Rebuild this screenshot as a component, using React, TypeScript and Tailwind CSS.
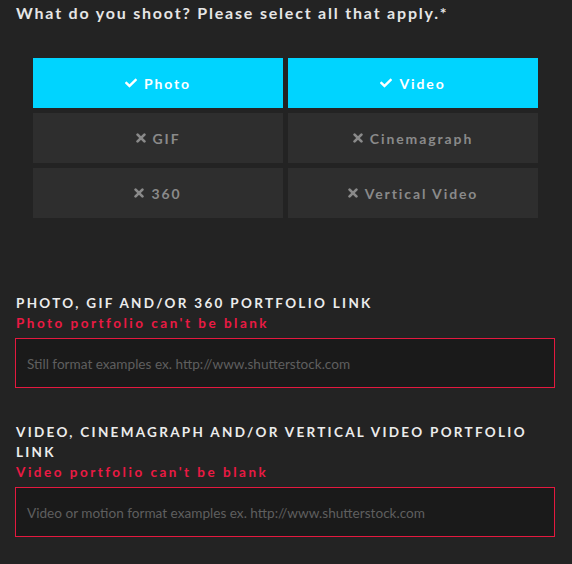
import React from "react";
import { FaCheck } from "react-icons/fa";

const opts = [
  { label: "Photo", on: true },
  { label: "Video", on: true },
  { label: "GIF", on: false },
  { label: "Cinemagraph", on: false },
  { label: "360", on: false },
  { label: "Vertical Video", on: false },
];

function XIcon() {
  return (
    <svg width="10" height="10" viewBox="0 0 10 10" className="shrink-0">
      <path d="M1.6 1.6 L8.4 8.4 M8.4 1.6 L1.6 8.4" stroke="currentColor" strokeWidth="2.7" strokeLinecap="round" />
    </svg>
  );
}

export default function App() {
  return (
    <div
      className="w-[572px] h-[564px] bg-[#232323] overflow-hidden"
      style={{ fontFamily: "Lato, 'Open Sans', sans-serif" }}
    >
      <div className="px-[15px] pt-[2px]">
        <div className="pl-[1px] text-[16px] leading-[22px] font-bold tracking-[1.8px] text-[#e6e6e6]">
          What do you shoot? Please select all that apply.*
        </div>
        <div className="grid grid-cols-[250px_250px] gap-[5px] mt-[34px] ml-[18px]">
          {opts.map((o) => (
            <div
              key={o.label}
              className={
                "h-[50px] flex items-center justify-center gap-[7px] text-[14px] font-bold tracking-[1.9px] " +
                (o.on ? "bg-[#00d4ff] text-white" : "bg-[#2e2e2e] text-[#8a8a8a]")
              }
            >
              {o.on ? <FaCheck className="w-[12px] h-[12px]" /> : <XIcon />}
              <span>{o.label}</span>
            </div>
          ))}
        </div>

        <div className="mt-[75px] pl-[1px] text-[13.5px] leading-[20px] font-bold tracking-[2.3px] text-[#ececec]">
          PHOTO, GIF AND/OR 360 PORTFOLIO LINK
        </div>
        <div className="pl-[1px] text-[13.5px] leading-[20px] font-bold tracking-[2.5px] text-[#ea1a44]">
          Photo portfolio can't be blank
        </div>
        <div className="mt-[5px] h-[50px] w-[540px] border border-[#e4193f] bg-[#1a1a1a] flex items-center pl-[11px] pt-[3px] text-[13.6px] text-[#5f5f5f]">
          Still format examples ex. http://www.shutterstock.com
        </div>

        <div className="mt-[34px] pl-[1px] text-[13.5px] leading-[20px] font-bold tracking-[2.3px] text-[#ececec] w-[530px]">
          VIDEO, CINEMAGRAPH AND/OR VERTICAL VIDEO PORTFOLIO LINK
        </div>
        <div className="pl-[1px] text-[13.5px] leading-[20px] font-bold tracking-[2.5px] text-[#ea1a44]">
          Video portfolio can't be blank
        </div>
        <div className="mt-[5px] h-[50px] w-[540px] border border-[#e4193f] bg-[#1a1a1a] flex items-center pl-[11px] pt-[3px] text-[13.6px] text-[#5f5f5f]">
          Video or motion format examples ex. http://www.shutterstock.com
        </div>
      </div>
    </div>
  );
}
